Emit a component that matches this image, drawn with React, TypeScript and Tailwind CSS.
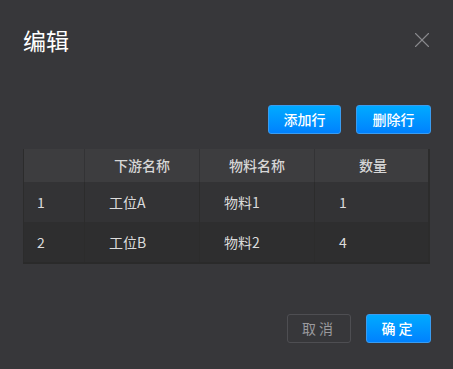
import { X } from 'lucide-react';

const rows = [
  { no: '1', station: '工位A', material: '物料1', qty: '1' },
  { no: '2', station: '工位B', material: '物料2', qty: '4' },
];

export default function App() {
  return (
    <div
      className="w-[453px] h-[369px] bg-[#37373a] text-[#e6e6e6] flex flex-col"
      style={{ fontFamily: '"Noto Sans CJK SC", "Noto Sans", sans-serif' }}
    >
      <div className="flex items-center justify-between pl-[23px] pr-[18px] pt-[22px] h-[58px]">
        <span className="text-[23px] leading-none text-white">编辑</span>
        <X className="w-[26px] h-[26px] text-[#8a8a8e]" strokeWidth={1} />
      </div>

      <div className="flex justify-end gap-[15px] pr-[22px] mt-[47px]">
        <button className="w-[73px] h-[29px] rounded-[3px] border border-[#3a9cf0] bg-gradient-to-b from-[#00aaff] to-[#0081fe] text-white text-[14px] font-medium">
          添加行
        </button>
        <button className="w-[75px] h-[29px] rounded-[3px] border border-[#3a9cf0] bg-gradient-to-b from-[#00aaff] to-[#0081fe] text-white text-[14px] font-medium">
          删除行
        </button>
      </div>

      <div className="mx-[23px] mt-[15px] bg-[#2e2e2f] border-b-2 border-[#2a2a2a]">
        <div className="grid grid-cols-[61px_115px_115px_116px] h-[33px] bg-[#3d3d3f] border-l border-r-2 border-[#2c2c2c] text-[14px] font-medium text-[#d6d6d6]">
          <div className="border-r border-[#333335]" />
          <div className="flex items-center justify-center border-r border-[#333335]">下游名称</div>
          <div className="flex items-center justify-center border-r border-[#333335]">物料名称</div>
          <div className="flex items-center justify-center">数量</div>
        </div>
        {rows.map((r, i) => (
          <div
            key={r.no}
            className={
              'grid grid-cols-[61px_115px_115px_116px] h-[40px] text-[14px] text-[#dcdcdc] border-l border-r-2 border-[#2c2c2c] ' +
              (i === 0 ? 'bg-[#333335]' : 'bg-[#2e2e2f]')
            }
          >
            <div className="flex items-center pl-[13px] border-r border-[#2c2c2c]">{r.no}</div>
            <div className="flex items-center pl-[24px] border-r border-[#2c2c2c]">{r.station}</div>
            <div className="flex items-center pl-[24px] border-r border-[#2c2c2c]">{r.material}</div>
            <div className="flex items-center pl-[24px]">{r.qty}</div>
          </div>
        ))}
      </div>

      <div className="flex justify-end gap-[15px] pr-[22px] mt-[50px]">
        <button className="w-[64px] h-[29px] rounded-[3px] border border-[#4e4e52] bg-transparent text-[#9a9a9e] text-[14px] tracking-[3px]">
          取消
        </button>
        <button className="w-[65px] h-[29px] rounded-[3px] border border-[#3a9cf0] bg-gradient-to-b from-[#00aaff] to-[#0081fe] text-white text-[14px] font-medium tracking-[3px]">
          确定
        </button>
      </div>
    </div>
  );
}
